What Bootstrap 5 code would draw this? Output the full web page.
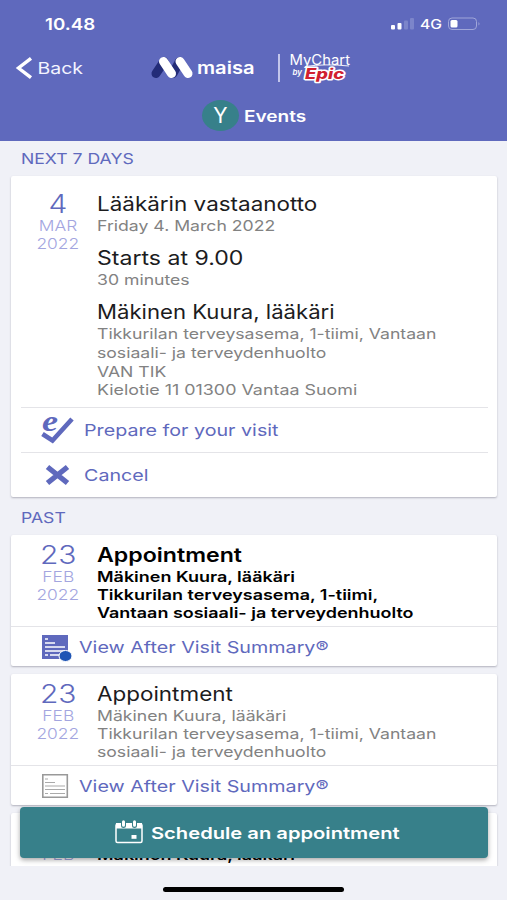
<!DOCTYPE html>
<html lang="en">
<head>
<meta charset="utf-8">
<meta name="viewport" content="width=device-width, initial-scale=1">
<title>Events</title>
<link href="https://cdn.jsdelivr.net/npm/bootstrap@5.3.0/dist/css/bootstrap.min.css" rel="stylesheet">
<style>
:root{--indigo:#5f69bd;--teal:#37808a;--page:#f0f1f7}
html,body{height:900px;overflow:hidden}
body{font-family:Inter,"Liberation Sans",sans-serif;background:var(--page);color:#222}
svg{display:block;flex:none;overflow:visible}
.phone{width:507px;height:900px}
.app-head{height:141px;background:var(--indigo);color:#fff}
.status-line{height:48px;padding:0 26px 0 45px}
.brand-line{height:39px;padding-left:16px}
.title-line{height:54px;padding:3px 0 0 202px}
/* wide lettering: every line is stretched from its left edge */
.ln{display:block;width:max-content;white-space:nowrap;transform:scaleX(var(--sx,1.2));transform-origin:0 50%}
.clock{--sx:1.17}
.heading{--sx:1.19;margin-left:5px}
.avatar{width:37px;height:31px;border-radius:50%;background:var(--teal);font-size:21px;line-height:31px}
.scroller{height:725px;overflow:hidden}
.sect{height:35px;padding-left:21px;font-size:14.7px;line-height:36px;color:var(--indigo)}
.sect.past{height:38px;line-height:43px}
.visit{margin:0 10px 0 11px;width:486px;background:#fff;border-radius:2px;box-shadow:0 1px 2px rgba(60,60,80,.35)}
.visit+.visit{margin-top:8px}
.visit-top{height:91px;padding-top:7px}
.visit-top.next{height:231px;padding-top:15px}
.when{width:86px;padding-left:8px;flex:none;text-align:center;color:#a3a5df;font-weight:300;font-size:14.5px;line-height:18px}
.when .ln{margin-left:auto;margin-right:auto;transform-origin:50% 50%}
.when .day{font-size:25px;line-height:26px;font-weight:300;color:var(--indigo)}
.ttl{font-size:19.7px;line-height:26px;color:#1c1c1e;--sx:1.14}
.who{--sx:1.124}
.time{--sx:1.172}
.gap-top{margin-top:10px}
.sub{font-size:14.7px;line-height:18px;color:#828282}
.tall{line-height:20px}
.addr{--sx:1.217}
.visit.unread .ttl{font-weight:600;color:#000;--sx:1.175}
.visit.unread .sub{font-weight:600;color:#000;--sx:1.223}
.act{font-size:16.5px;color:var(--indigo);text-decoration:none;border-top:1px solid #e4e4e8}
.act-in{height:45px;margin:0 9px 0 10px;padding-left:20px}
.act-full{height:40px;padding:1px 0 0 30px}
.act-full .ln{--sx:1.195}
.act-in .ln{--sx:1.193}
.cta{left:20px;top:807px;width:468px;height:51px;border-radius:4px;background:var(--teal);color:#fff;font-weight:600;font-size:16.5px;box-shadow:0 2px 5px rgba(0,0,0,.35);border:0;padding:1px 0 0 95px}
.cta .ln{--sx:1.222}
.home-pill{width:181px;height:5px;border-radius:3px;background:#000;margin:21px auto 0 163px}
</style>
<script src="https://cdn.jsdelivr.net/npm/bootstrap@5.3.0/dist/js/bootstrap.bundle.min.js"></script>
</head>
<body>
<div class="phone position-relative">
  <header class="app-head">
    <div class="status-line d-flex align-items-center justify-content-between">
      <span class="ln clock fw-semibold">10.48</span>
      <svg width="92" height="16" viewBox="0 0 92 16">
        <rect x="2" y="9" width="4" height="4.600" rx="1" fill="#fff"/><rect x="8.500" y="7" width="4" height="6.600" rx="1" fill="#fff"/>
        <rect x="15" y="4.500" width="4" height="9" rx="1" fill="#7c85ca"/><rect x="21" y="2" width="4" height="11.500" rx="1" fill="#7c85ca"/>
        <text x="31" y="13" fill="#fff" font-size="13" font-weight="500" textLength="22" lengthAdjust="spacingAndGlyphs">4G</text>
        <rect x="59.500" y="2" width="28" height="11.500" rx="3.500" fill="none" stroke="#a0a6d9"/><rect x="61.500" y="4" width="7" height="7.500" rx="1.500" fill="#fff"/><path d="M89.500 6q2 1.800 0 3.500z" fill="#a0a6d9"/>
      </svg>
    </div>
    <div class="brand-line d-flex align-items-center">
      <svg width="340" height="36" viewBox="16 50 340 36">
        <path d="M31 58.300 18.500 68 31 77.700" fill="none" stroke="#fff" stroke-width="3.400"/>
        <text x="37.500" y="74" fill="#f3f4ff" font-size="16.500" textLength="45.500" lengthAdjust="spacingAndGlyphs">Back</text>
        <path d="M156 73.500 164 61.500M173 73.500 179.500 61.500" stroke="#232c78" stroke-width="9" stroke-linecap="round"/>
        <path d="M163.500 61.500 171.500 73.500M180 61.500 188 73.500" stroke="#fff" stroke-width="9" stroke-linecap="round"/>
        <text x="197" y="74" fill="#fff" font-size="17" font-weight="600" textLength="57.500" lengthAdjust="spacingAndGlyphs">maisa</text>
        <path d="M279 54V82" stroke="#eef" stroke-width="1.400"/>
        <text x="289.500" y="64.500" fill="#fff" font-size="14.500" textLength="60.500" lengthAdjust="spacingAndGlyphs">MyChart</text>
        <path d="M305 66.500Q325 63.500 349 66" fill="none" stroke="#fff" stroke-width=".9"/>
        <text x="292.500" y="75" fill="#fff" font-size="8" font-style="italic" font-weight="600" textLength="9.500" lengthAdjust="spacingAndGlyphs">by</text>
        <text x="305" y="79" fill="#d0202f" stroke="#fff" stroke-width="2.800" stroke-linejoin="round" paint-order="stroke" font-size="14" font-style="italic" font-weight="800" textLength="39" lengthAdjust="spacingAndGlyphs">Epic</text>
      </svg>
    </div>
    <div class="title-line d-flex align-items-center">
      <span class="avatar text-center">Y</span>
      <span class="ln heading fw-semibold">Events</span>
    </div>
  </header>

  <main class="scroller">
    <div class="sect"><span class="ln">NEXT 7 DAYS</span></div>
    <article class="visit">
      <div class="visit-top next d-flex">
        <div class="when"><span class="ln day">4</span><span class="ln">MAR</span><span class="ln">2022</span></div>
        <div>
          <div class="ln ttl">Lääkärin vastaanotto</div>
          <div class="ln sub">Friday 4. March 2022</div>
          <div class="ln ttl time gap-top">Starts at 9.00</div>
          <div class="ln sub">30 minutes</div>
          <div class="ln ttl who gap-top">Mäkinen Kuura, lääkäri</div>
          <div class="ln sub">Tikkurilan terveysasema, 1-tiimi, Vantaan</div>
          <div class="ln sub tall">sosiaali- ja terveydenhuolto</div>
          <div class="ln sub">VAN TIK</div>
          <div class="ln sub addr">Kielotie 11 01300 Vantaa Suomi</div>
        </div>
      </div>
      <a class="act act-in d-flex align-items-center" href="#">
        <svg width="43" height="42" viewBox="0 -6 43 42"><text x="1" y="16" font-family="Liberation Serif, serif" font-style="italic" font-weight="700" font-size="29" fill="#5f69bd" textLength="16" lengthAdjust="spacingAndGlyphs">e</text><path d="M1.500 19 11.500 25.500 31 4" fill="none" stroke="#5f69bd" stroke-width="4.600"/></svg>
        <span class="ln">Prepare for your visit</span>
      </a>
      <a class="act act-in d-flex align-items-center" href="#">
        <svg width="43" height="30" viewBox="0 0 43 30"><path d="M6.500 7 26.500 23M26.500 7 6.500 23" stroke="#5f69bd" stroke-width="5.400"/></svg>
        <span class="ln">Cancel</span>
      </a>
    </article>

    <div class="sect past"><span class="ln">PAST</span></div>
    <article class="visit unread">
      <div class="visit-top d-flex">
        <div class="when"><span class="ln day">23</span><span class="ln">FEB</span><span class="ln">2022</span></div>
        <div>
          <div class="ln ttl">Appointment</div>
          <div class="ln sub">Mäkinen Kuura, lääkäri</div>
          <div class="ln sub">Tikkurilan terveysasema, 1-tiimi,</div>
          <div class="ln sub">Vantaan sosiaali- ja terveydenhuolto</div>
        </div>
      </div>
      <a class="act act-full d-flex align-items-center" href="#">
        <svg width="38" height="30" viewBox="0 0 38 30"><path fill="#5f69bd" d="M1 3h26v24H1z"/><path d="M4 7h3M4 11h10M4 15h20M4 19h20M4 23h3M9 23h12" stroke="#fff" stroke-width="1.400"/><ellipse cx="24.500" cy="24" rx="6.500" ry="5.500" fill="#1f55b5" stroke="#fff"/></svg>
        <span class="ln">View After Visit Summary®</span>
      </a>
    </article>
    <article class="visit">
      <div class="visit-top d-flex">
        <div class="when"><span class="ln day">23</span><span class="ln">FEB</span><span class="ln">2022</span></div>
        <div>
          <div class="ln ttl">Appointment</div>
          <div class="ln sub">Mäkinen Kuura, lääkäri</div>
          <div class="ln sub">Tikkurilan terveysasema, 1-tiimi, Vantaan</div>
          <div class="ln sub">sosiaali- ja terveydenhuolto</div>
        </div>
      </div>
      <a class="act act-full d-flex align-items-center" href="#">
        <svg width="38" height="30" viewBox="0 0 38 30"><path d="M1.800 3.800h24.500v22.500H1.800z" fill="#fff" stroke="#999" stroke-width="1.600"/><path d="M4 8h3M4 11.500h10M4 15h20M4 18.500h20M4 22.500h3M9 22.500h15" stroke="#aaa" stroke-width="1.200"/></svg>
        <span class="ln">View After Visit Summary®</span>
      </a>
    </article>
    <article class="visit unread">
      <div class="visit-top d-flex">
        <div class="when"><span class="ln day">23</span><span class="ln">FEB</span></div>
        <div>
          <div class="ln ttl">Appointment</div>
          <div class="ln sub">Mäkinen Kuura, lääkäri</div>
        </div>
      </div>
    </article>
  </main>
  <button class="cta position-absolute d-flex align-items-center">
    <svg width="36" height="30" viewBox="0 0 36 30"><rect x="1" y="6" width="26" height="18.500" rx="1.500" fill="none" stroke="#fff" stroke-width="1.500"/><path d="M1 5h26v5.500H1z" fill="#fff"/><path d="M8.500 4.500v3M19.500 4.500v3" stroke="#37808a" stroke-width="5" stroke-linecap="round"/><path d="M8.500 3.800v3.400M19.500 3.800v3.400" stroke="#fff" stroke-width="3" stroke-linecap="round"/><path d="M16.500 17h5v3.800h-5z" fill="#fff"/></svg>
    <span class="ln">Schedule an appointment</span>
  </button>
  <div class="home-pill"></div>
</div>
</body>
</html>
